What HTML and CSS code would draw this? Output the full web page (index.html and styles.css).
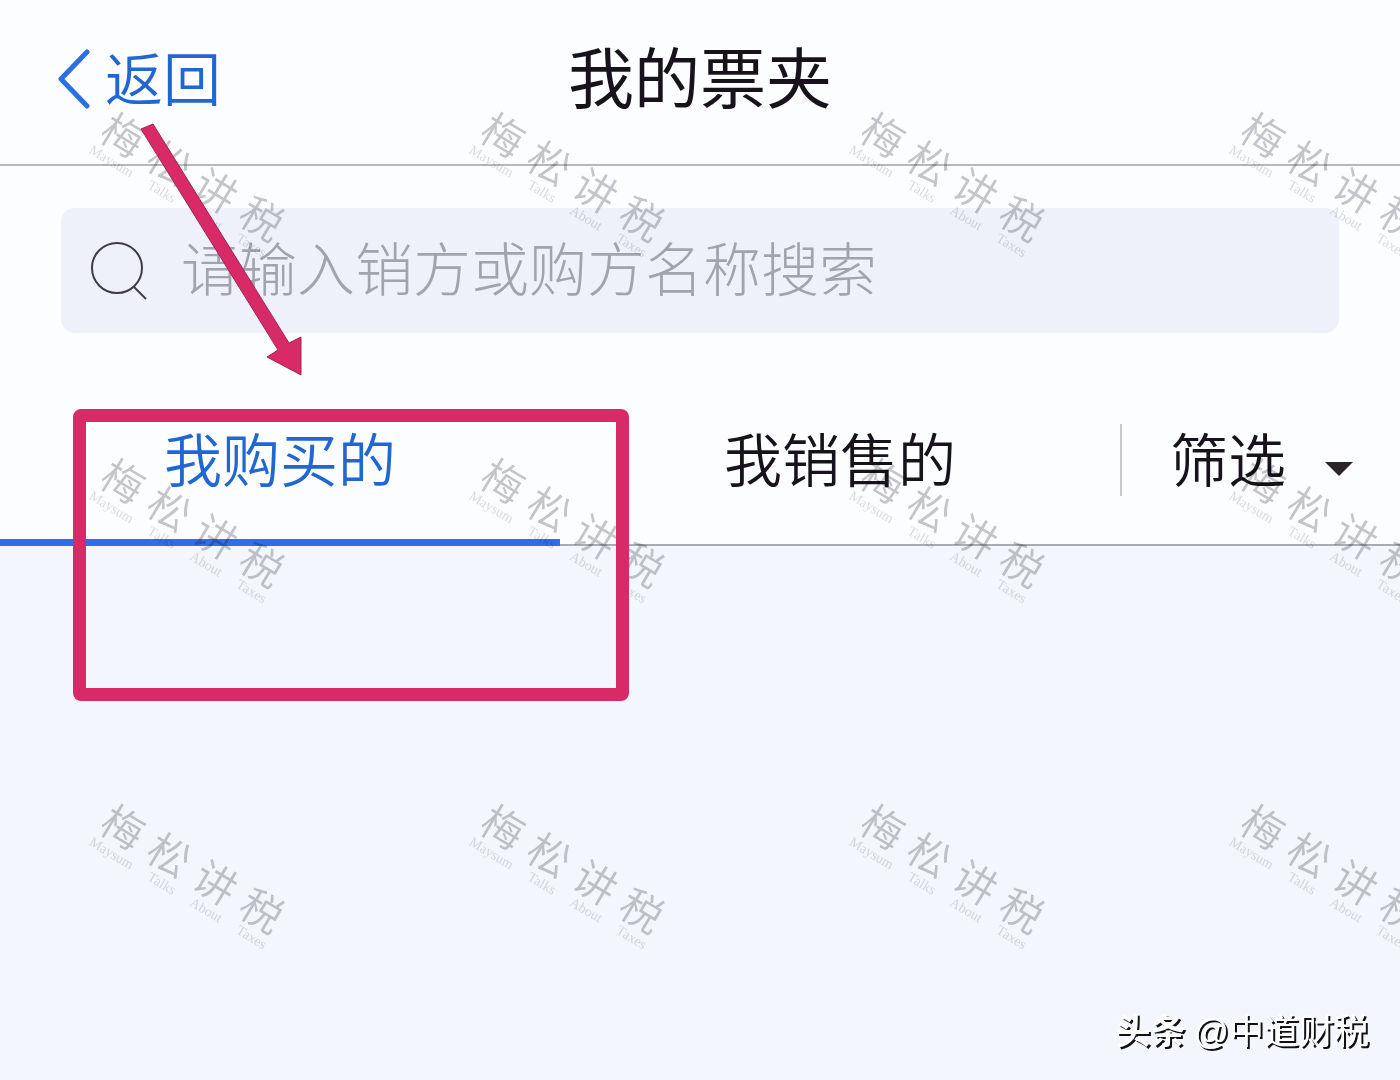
FILE: index.html
```html
<!DOCTYPE html>
<html lang="zh-CN">
<head>
    <meta charset="UTF-8" />
    <meta name="viewport" content="width=device-width, initial-scale=1.0" />
    <title>我的票夹</title>
    <link rel="stylesheet" href="styles.css">
</head>
<body>

<header class="header">
    <a class="back" href="#">
        <svg class="back-icon" viewBox="0 0 34 60" aria-hidden="true">
            <path d="M30 3 L4 30 L30 57" />
        </svg>
        返回
    </a>
    <h1 class="title">我的票夹</h1>
</header>

<main>
    <form class="search" role="search">
        <label class="search-label" for="keyword" aria-label="搜索">
            <svg class="search-icon" viewBox="0 0 56 60" aria-hidden="true">
                <circle cx="26" cy="27" r="25" />
                <path d="M43 46 L55 58" />
            </svg>
        </label>
        <input class="search-input" type="text" id="keyword" name="keyword" placeholder="请输入销方或购方名称搜索" />
    </form>

    <nav class="tabs">
        <button class="tab active" type="button">我购买的</button>
        <button class="tab" type="button">我销售的</button>
        <button class="filter" type="button">
            筛选
            <svg class="caret" viewBox="0 0 30 16" aria-hidden="true">
                <path d="M1 1 H29 L15 15 Z" />
            </svg>
        </button>
        <div class="mark-box"></div>
    </nav>
</main>

<!-- Repeated watermark -->
<div class="watermarks" id="watermarks" aria-hidden="true"></div>

<svg class="mark-arrow" viewBox="0 0 170 260" aria-hidden="true">
    <path d="M1 9 L13 4 L149 223 L161 217 L161 255 L127 237 L138 230 Z" />
</svg>

<div class="credit"><b>头条</b> <span class="at">@</span>中道财税</div>

<script>
    const layer = document.getElementById('watermarks');
    for (let i = 0; i < 12; i++) {
        const mark = document.createElement('div');
        mark.className = 'watermark';
        mark.innerHTML = '<div class="watermark-name"><span>梅</span><span>松</span><span>讲</span><span>税</span></div>' +
            '<div class="watermark-sub"><span>Maysum</span><span>Talks</span><span>About</span><span>Taxes</span></div>';
        layer.appendChild(mark);
    }
</script>

</body>
</html>
```

FILE: styles.css
```css
* {
    box-sizing: border-box;
}
body {
    font-family: "Noto Sans CJK SC", sans-serif;
    font-weight: 350;
    background: #f3f6fc;
    color: #17121c;
    margin: 0;
    min-height: 100vh;
    position: relative;
    overflow-x: hidden;
}
button, input {
    font: inherit;
    color: inherit;
    background: none;
    border: none;
    padding: 0;
}
button {
    cursor: pointer;
}

/* Header */
.header {
    display: grid;
    grid-template-columns: 1fr auto 1fr;
    align-items: center;
    height: 166px;
    padding: 0 57px 16px;
    background: #fcfdff;
    border-bottom: 2px solid #b6b8bf;
}
.back {
    display: flex;
    align-items: center;
    gap: 14px;
    margin-top: 4px;
    font-size: 58px;
    line-height: 72px;
    color: #2167d2;
    text-decoration: none;
}
.back-icon {
    width: 34px;
    height: 60px;
    margin-top: 6px;
    fill: none;
    stroke: #2b6fe0;
    stroke-width: 5;
    stroke-linecap: round;
    stroke-linejoin: round;
}
.title {
    margin: 0;
    font-size: 66px;
    line-height: 80px;
    font-weight: 400;
}

/* Search */
main {
    background: #fcfdff;
    padding-top: 42px;
}
.search {
    display: flex;
    align-items: center;
    gap: 34px;
    height: 125px;
    margin: 0 61px;
    padding: 0 30px;
    background: #eef1f9;
    border-radius: 14px;
}
.search-label {
    display: flex;
}
.search-icon {
    width: 56px;
    height: 60px;
    fill: none;
    stroke: #3f3c48;
    stroke-width: 2;
}
.search-input {
    flex: 1;
    min-width: 0;
    height: 98px;
    padding-bottom: 10px;
    font-size: 58px;
    font-weight: 300;
    outline: none;
}
.search-input::placeholder {
    color: #a2a4ad;
    opacity: 1;
}

/* Tabs */
.tabs {
    display: grid;
    grid-template-columns: 2fr 2fr 1fr;
    height: 213px;
    position: relative;
    border-bottom: 2px solid #a9abb2;
}
.tab {
    height: 213px;
    padding-top: 42px;
    font-size: 58px;
    line-height: 72px;
    border-bottom: 7px solid transparent;
}
.tab.active {
    color: #2167d2;
    border-bottom-color: #2d6fe6;
}
.filter {
    display: flex;
    align-items: center;
    justify-content: space-between;
    height: 72px;
    margin-top: 91px;
    padding: 0 46px 6px 48px;
    font-size: 58px;
    line-height: 72px;
    border-left: 2px solid #c9cad0;
}
.tab, .filter {
    white-space: nowrap;
}
.caret {
    width: 30px;
    height: 16px;
    margin-top: 24px;
    fill: #2a2327;
}

/* Highlight box and arrow */
.mark-box {
    position: absolute;
    left: 73px;
    top: 76px;
    width: 556px;
    height: 292px;
    border: 13px solid #d92a68;
    border-radius: 8px;
    z-index: 2;
    pointer-events: none;
}
.mark-arrow {
    position: absolute;
    left: 140px;
    top: 120px;
    width: 170px;
    height: 260px;
    fill: #d92a68;
    stroke: #a52356;
    stroke-width: 1;
    z-index: 2;
    pointer-events: none;
}

/* Watermark */
.watermarks {
    position: absolute;
    inset: 0;
    display: grid;
    grid-template-columns: repeat(4, 380px);
    grid-auto-rows: 346px;
    padding-top: 8px;
    overflow: hidden;
    mix-blend-mode: multiply;
    z-index: 1;
    pointer-events: none;
}
.watermark {
    display: flex;
    flex-direction: column;
    place-self: center;
    width: 204px;
    color: #c6c7cb;
    transform: rotate(31deg);
}
.watermark-name, .watermark-sub {
    display: flex;
    justify-content: space-between;
}
.watermark-name {
    font-size: 42px;
    line-height: 48px;
}
.watermark-sub {
    font-family: "Liberation Serif", serif;
    font-size: 14px;
    line-height: 14px;
    opacity: 0.6;
}

.credit {
    position: absolute;
    right: 31px;
    bottom: 24px;
    font-size: 35px;
    line-height: 48px;
    font-weight: 400;
    color: #fff;
    text-shadow: 2px 2px 0 #111;
}
.credit b {
    font-weight: 700;
}
.at {
    font-family: "Liberation Sans", sans-serif;
}
```
